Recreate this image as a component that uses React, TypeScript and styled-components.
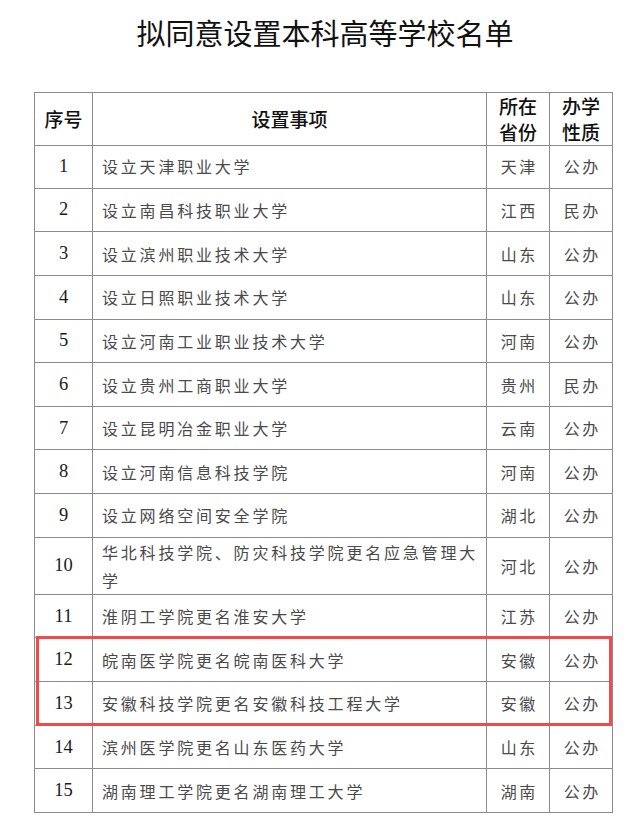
import React from "react";
import styled, { createGlobalStyle } from "styled-components";

const GlobalStyle = createGlobalStyle`
    html, body {
        margin: 0;
        padding: 0;
        background: #ffffff;
    }
    body {
        font-family: "Noto Sans CJK SC", "Noto Sans", sans-serif;
    }
`;

type Entry = { no: number; item: string; province: string; kind: string };

const entries: Entry[] = [
    { no: 1, item: "设立天津职业大学", province: "天津", kind: "公办" },
    { no: 2, item: "设立南昌科技职业大学", province: "江西", kind: "民办" },
    { no: 3, item: "设立滨州职业技术大学", province: "山东", kind: "公办" },
    { no: 4, item: "设立日照职业技术大学", province: "山东", kind: "公办" },
    { no: 5, item: "设立河南工业职业技术大学", province: "河南", kind: "公办" },
    { no: 6, item: "设立贵州工商职业大学", province: "贵州", kind: "民办" },
    { no: 7, item: "设立昆明冶金职业大学", province: "云南", kind: "公办" },
    { no: 8, item: "设立河南信息科技学院", province: "河南", kind: "公办" },
    { no: 9, item: "设立网络空间安全学院", province: "湖北", kind: "公办" },
    { no: 10, item: "华北科技学院、防灾科技学院更名应急管理大学", province: "河北", kind: "公办" },
    { no: 11, item: "淮阴工学院更名淮安大学", province: "江苏", kind: "公办" },
    { no: 12, item: "皖南医学院更名皖南医科大学", province: "安徽", kind: "公办" },
    { no: 13, item: "安徽科技学院更名安徽科技工程大学", province: "安徽", kind: "公办" },
    { no: 14, item: "滨州医学院更名山东医药大学", province: "山东", kind: "公办" },
    { no: 15, item: "湖南理工学院更名湖南理工大学", province: "湖南", kind: "公办" },
];

const highlighted = [12, 13];

export default function App() {
    const renderRow = (e: Entry) => (
        <Row key={e.no} $tall={e.no === 10}>
            <NumCell>{e.no}</NumCell>
            <ItemCell>{e.item}</ItemCell>
            <CenterCell>{e.province}</CenterCell>
            <CenterCell>{e.kind}</CenterCell>
        </Row>
    );

    const before = entries.filter((e) => e.no < highlighted[0]);
    const marked = entries.filter((e) => highlighted.includes(e.no));
    const after = entries.filter((e) => e.no > highlighted[highlighted.length - 1]);

    return (
        <Page>
            <GlobalStyle />
            <Title>拟同意设置本科高等学校名单</Title>
            <Table>
                <HeadRow>
                    <HeadCell>序号</HeadCell>
                    <HeadCell>设置事项</HeadCell>
                    <HeadCell>
                        所在
                        <br />
                        省份
                    </HeadCell>
                    <HeadCell>
                        办学
                        <br />
                        性质
                    </HeadCell>
                </HeadRow>
                {before.map(renderRow)}
                <Highlight>{marked.map(renderRow)}</Highlight>
                {after.map(renderRow)}
            </Table>
        </Page>
    );
}

const Page = styled.div`
    width: 640px;
    height: 826px;
    padding-top: 12px;
    box-sizing: border-box;
`;

const Title = styled.h1`
    margin: 0;
    text-align: center;
    font-size: 29px;
    line-height: 40px;
    font-weight: 400;
    color: #111;
    padding-left: 10px;
`;

const Table = styled.div`
    margin: 40px 0 0 34px;
    width: 579px;
    border-top: 1px solid #8c8c8c;
    border-left: 1px solid #8c8c8c;
    box-sizing: border-box;
`;

const cols = "58px 394px 63px 63px";

const HeadRow = styled.div`
    display: grid;
    grid-template-columns: ${cols};
    height: 52px;
`;

const Row = styled.div<{ $tall?: boolean }>`
    display: grid;
    grid-template-columns: ${cols};
    height: ${(p) => (p.$tall ? "57px" : "43.65px")};
`;

const Cell = styled.div`
    border-right: 1px solid #8c8c8c;
    border-bottom: 1px solid #8c8c8c;
    display: flex;
    align-items: center;
    box-sizing: border-box;
`;

const HeadCell = styled(Cell)`
    justify-content: center;
    text-align: center;
    font-size: 19px;
    line-height: 26px;
    font-weight: 500;
    color: #111;
`;

const NumCell = styled(Cell)`
    justify-content: center;
    font-family: "Liberation Serif", "Times New Roman", serif;
    font-size: 18.5px;
    color: #1a1a1a;
`;

const ItemCell = styled(Cell)`
    padding: 0 4px 0 9px;
    font-size: 16px;
    line-height: 28px;
    letter-spacing: 2.8px;
    color: #4a4a4a;
`;

const CenterCell = styled(Cell)`
    justify-content: center;
    padding-left: 2.6px;
    font-size: 16px;
    letter-spacing: 2.6px;
    color: #4a4a4a;
`;

const Highlight = styled.div`
    position: relative;
    &::after {
        content: "";
        position: absolute;
        left: 1px;
        right: 1px;
        top: -2px;
        bottom: 0;
        border: 3px solid #f04a4a;
        pointer-events: none;
    }
`;
